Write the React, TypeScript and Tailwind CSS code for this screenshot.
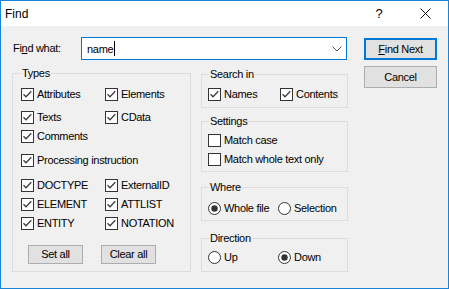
import React from "react";

function CheckBox({ checked }: { checked: boolean }) {
  return (
    <svg width="13" height="13" viewBox="0 0 13 13" className="shrink-0">
      <rect x="0.5" y="0.5" width="12" height="12" fill="#ffffff" stroke="#333333" />
      {checked && (
        <path d="M2.5 6.2 L5 8.8 L10.3 3.2" fill="none" stroke="#3c3c3c" strokeWidth="1.25" />
      )}
    </svg>
  );
}

function Radio({ checked }: { checked: boolean }) {
  return (
    <svg width="13" height="13" viewBox="0 0 13 13" className="shrink-0">
      <circle cx="6.5" cy="6.5" r="6" fill="#ffffff" stroke="#333333" />
      {checked && <circle cx="6.5" cy="6.5" r="3.2" fill="#333333" />}
    </svg>
  );
}

function Check({ label, checked = true, w }: { label: string; checked?: boolean; w?: string }) {
  return (
    <div className={`flex items-center h-[13px] gap-[3px] ${w ?? ""}`}>
      <CheckBox checked={checked} />
      <span className="leading-[13px] whitespace-nowrap">{label}</span>
    </div>
  );
}

function Opt({ label, checked = false, w }: { label: string; checked?: boolean; w?: string }) {
  return (
    <div className={`flex items-center h-[13px] gap-[3px] ${w ?? ""}`}>
      <Radio checked={checked} />
      <span className="leading-[13px] whitespace-nowrap">{label}</span>
    </div>
  );
}

export default function App() {
  return (
    <div className="w-[449px] h-[289px] border border-[#1883d7] bg-[#f0f0f0] flex flex-col text-black font-['Liberation_Sans',Arial,sans-serif] text-[11px] tracking-[-0.3px] overflow-hidden">
      {/* title bar */}
      <div className="h-[25px] bg-white flex items-center shrink-0">
        <span className="pl-[4px] text-[12px] tracking-[0px] leading-[16px]">Find</span>
        <div className="ml-auto flex h-full">
          <div className="w-[46px] h-full flex items-center justify-center text-[13px] tracking-[0px]">?</div>
          <div className="w-[46px] h-full flex items-center justify-center">
            <svg width="11" height="11" viewBox="0 0 11 11">
              <path d="M0.5 0.5 L10.5 10.5 M10.5 0.5 L0.5 10.5" stroke="#111" strokeWidth="1" />
            </svg>
          </div>
        </div>
      </div>

      {/* body */}
      <div className="flex pl-[11px] pt-[11px]">
        <div className="flex flex-col w-[336px]">
          <div className="flex items-center h-[23px]">
            <span className="w-[69px] pl-[1px]">
              Fi<span className="underline underline-offset-[1px]">n</span>d what:
            </span>
            <div className="w-[266px] h-[23px] border border-[#0078d7] bg-white flex items-center pl-[5px]">
              <span className="leading-[14px]">name</span>
              <span className="w-[1px] h-[15px] bg-black ml-[1px]" />
              <svg width="10" height="6" viewBox="0 0 10 6" className="ml-auto mr-[4px]">
                <path d="M0.5 0.5 L5 5 L9.5 0.5" fill="none" stroke="#606060" strokeWidth="1" />
              </svg>
            </div>
          </div>

          <div className="flex mt-[6px] gap-[10px]">
            {/* Types */}
            <fieldset className="w-[179px] h-[206px] border border-[#dcdcdc] px-[8px]">
              <legend className="ml-[0px] px-[1px] leading-[14px]">Types</legend>
              <div className="flex mt-[8px]">
                <Check label="Attributes" w="w-[84px]" />
                <Check label="Elements" />
              </div>
              <div className="flex mt-[10px]">
                <Check label="Texts" w="w-[84px]" />
                <Check label="CData" />
              </div>
              <div className="flex mt-[6px]">
                <Check label="Comments" />
              </div>
              <div className="flex mt-[11px]">
                <Check label="Processing instruction" />
              </div>
              <div className="flex mt-[12px]">
                <Check label="DOCTYPE" w="w-[84px]" />
                <Check label="ExternalID" />
              </div>
              <div className="flex mt-[6px]">
                <Check label="ELEMENT" w="w-[84px]" />
                <Check label="ATTLIST" />
              </div>
              <div className="flex mt-[6px]">
                <Check label="ENTITY" w="w-[84px]" />
                <Check label="NOTATION" />
              </div>
              <div className="flex mt-[15px] ml-[7px] gap-[18px]">
                <div className="w-[55px] h-[19px] border border-[#adadad] bg-[#e1e1e1] flex items-center justify-center">
                  Set all
                </div>
                <div className="w-[55px] h-[19px] border border-[#adadad] bg-[#e1e1e1] flex items-center justify-center">
                  Clear all
                </div>
              </div>
            </fieldset>

            {/* right column */}
            <div className="flex flex-col w-[147px] mt-[1px]">
              <fieldset className="h-[41px] border border-[#dcdcdc] px-[6px]">
                <legend className="ml-[1px] px-[1px] leading-[14px]">Search in</legend>
                <div className="flex mt-[7px]">
                  <Check label="Names" w="w-[72px]" />
                  <Check label="Contents" />
                </div>
              </fieldset>
              <fieldset className="h-[58px] mt-[6px] border border-[#dcdcdc] px-[6px]">
                <legend className="ml-[1px] px-[1px] leading-[14px]">Settings</legend>
                <div className="flex mt-[6px]">
                  <Check label="Match case" checked={false} />
                </div>
                <div className="flex mt-[6px]">
                  <Check label="Match whole text only" checked={false} />
                </div>
              </fieldset>
              <fieldset className="h-[41px] mt-[8px] border border-[#dcdcdc] px-[6px]">
                <legend className="ml-[1px] px-[1px] leading-[14px]">Where</legend>
                <div className="flex mt-[8px]">
                  <Opt label="Whole file" checked w="w-[70px]" />
                  <Opt label="Selection" />
                </div>
              </fieldset>
              <fieldset className="h-[41px] mt-[10px] border border-[#dcdcdc] px-[6px]">
                <legend className="ml-[1px] px-[1px] leading-[14px]">Direction</legend>
                <div className="flex mt-[6px]">
                  <Opt label="Up" w="w-[70px]" />
                  <Opt label="Down" checked />
                </div>
              </fieldset>
            </div>
          </div>
        </div>

        {/* buttons */}
        <div className="flex flex-col ml-[16px] mt-[1px]">
          <div className="w-[73px] h-[22px] border-2 border-[#0078d7] bg-[#e1e1e1] flex items-center justify-center">
            <span>
              <span className="underline underline-offset-[1px]">F</span>ind Next
            </span>
          </div>
          <div className="w-[73px] h-[22px] mt-[6px] border border-[#adadad] bg-[#e1e1e1] flex items-center justify-center">
            Cancel
          </div>
        </div>
      </div>
    </div>
  );
}
